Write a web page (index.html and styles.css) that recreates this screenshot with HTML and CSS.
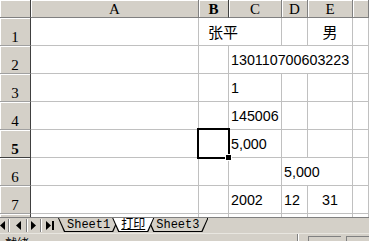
FILE: index.html
```html
<!DOCTYPE html>
<html lang="zh-CN">

<head>
  <meta charset="UTF-8">
  <meta name="viewport" content="width=device-width, initial-scale=1.0">
  <title>Book1</title>
  <link rel="stylesheet" href="styles.css">
</head>

<body>
  <div class="sheet">
    <!-- 欄標題 -->
    <div class="hd corner"></div>
    <div class="hd col">A</div>
    <div class="hd col sel">B</div>
    <div class="hd col">C</div>
    <div class="hd col">D</div>
    <div class="hd col">E</div>
    <div class="hd col"></div>

    <!-- 1 -->
    <div class="hd row">1</div>
    <div class="c"></div>
    <div class="c span2 cjk name">张平</div>
    <div class="c"></div>
    <div class="c mid cjk">男</div>
    <div class="c"></div>

    <!-- 2 -->
    <div class="hd row">2</div>
    <div class="c"></div>
    <div class="c"></div>
    <div class="c span3">130110700603223</div>
    <div class="c"></div>

    <!-- 3 -->
    <div class="hd row">3</div>
    <div class="c"></div>
    <div class="c"></div>
    <div class="c">1</div>
    <div class="c"></div>
    <div class="c"></div>
    <div class="c"></div>

    <!-- 4 -->
    <div class="hd row">4</div>
    <div class="c"></div>
    <div class="c"></div>
    <div class="c">145006</div>
    <div class="c"></div>
    <div class="c"></div>
    <div class="c"></div>

    <!-- 5 -->
    <div class="hd row sel">5</div>
    <div class="c"></div>
    <div class="c active"></div>
    <div class="c">5,000</div>
    <div class="c"></div>
    <div class="c"></div>
    <div class="c"></div>

    <!-- 6 -->
    <div class="hd row">6</div>
    <div class="c"></div>
    <div class="c"></div>
    <div class="c"></div>
    <div class="c span2">5,000</div>
    <div class="c"></div>

    <!-- 7 -->
    <div class="hd row">7</div>
    <div class="c"></div>
    <div class="c"></div>
    <div class="c">2002</div>
    <div class="c">12</div>
    <div class="c mid">31</div>
    <div class="c"></div>

    <!-- 8 -->
    <div class="hd row">8</div>
    <div class="c"></div>
    <div class="c"></div>
    <div class="c"></div>
    <div class="c"></div>
    <div class="c"></div>
    <div class="c"></div>
  </div>

  <div class="tabbar">
    <!-- 捲動按鈕 -->
    <svg class="nav" width="58" height="15" viewBox="0 0 58 15">
      <polygon points="0,7.5 5,3 5,12" fill="#000" />
      <line x1="8.5" y1="1" x2="8.5" y2="14" stroke="#808080" />
      <line x1="9.5" y1="1" x2="9.5" y2="14" stroke="#fff" />
      <polygon points="16,7.5 21,3 21,12" fill="#000" />
      <line x1="26.5" y1="1" x2="26.5" y2="14" stroke="#808080" />
      <line x1="27.5" y1="1" x2="27.5" y2="14" stroke="#fff" />
      <polygon points="31,3 31,12 36,7.5" fill="#000" />
      <line x1="40.5" y1="1" x2="40.5" y2="14" stroke="#808080" />
      <line x1="41.5" y1="1" x2="41.5" y2="14" stroke="#fff" />
      <polygon points="46,3 46,12 51,7.5" fill="#000" />
      <rect x="52" y="3" width="2" height="9" fill="#000" />
    </svg>
    <div class="tabs">
      <div class="tab"><div class="face">Sheet1</div></div>
      <div class="tab active"><div class="face">打印</div></div>
      <div class="tab"><div class="face">Sheet3</div></div>
    </div>
  </div>

  <div class="status">
    <span class="status-text">就绪</span>
    <span class="spacer"></span>
    <span class="grip"></span>
    <span class="panel one"></span>
    <span class="panel two"></span>
  </div>
</body>

</html>
```

FILE: styles.css
```css
* {
  margin: 0;
  padding: 0;
  box-sizing: border-box;
}

body {
  width: 369px;
  height: 241px;
  overflow: hidden;
  background: #d4d0c8;
  font-family: "Liberation Sans", "Noto Sans CJK SC", sans-serif;
}

/* 工作表 */
.sheet {
  display: grid;
  grid-template-columns: 31px 168px 30px 53px 26px 45px 1fr;
  grid-template-rows: 18px;
  grid-auto-rows: 28px;
  height: 217px;
  overflow: hidden;
  background: #fff;
}

.hd {
  display: flex;
  justify-content: center;
  background: #d4d0c8;
  border-right: 1px solid #808080;
  border-bottom: 1px solid #808080;
  box-shadow: inset 1px 1px #fff;
  font-family: "Liberation Serif", serif;
  font-size: 15px;
  color: #000;
}

.hd.col {
  align-items: center;
  line-height: 17px;
  padding-top: 1px;
}

.hd.row {
  align-items: flex-end;
  line-height: 15px;
  border-right-color: #404040;
  border-bottom-color: #a0a0a0;
}

.hd.corner {
  border-right-color: #404040;
}

.hd.sel {
  font-weight: bold;
}

.hd.col.sel {
  border-right-color: #404040;
}

.hd.row.sel {
  border-bottom-color: #404040;
}

.c {
  display: flex;
  align-items: flex-end;
  padding: 0 2px 5px;
  border-right: 1px solid #c0c0c0;
  border-bottom: 1px solid #c0c0c0;
  font-size: 14.3px;
  line-height: 16px;
  white-space: nowrap;
  color: #000;
}

.span2 {
  grid-column: span 2;
}

.span3 {
  grid-column: span 3;
}

.cjk {
  font-size: 15px;
  padding-bottom: 4px;
}

.name {
  padding-left: 9px;
}

.mid {
  justify-content: center;
}

/* 作用中儲存格 */
.active {
  position: relative;
}

.active::after {
  content: "";
  position: absolute;
  top: -2px;
  left: -2px;
  right: -2px;
  bottom: -2px;
  border: 2px solid #000;
}

.active::before {
  content: "";
  position: absolute;
  right: -4px;
  bottom: -4px;
  width: 5px;
  height: 5px;
  background: #000;
  border: 1px solid #fff;
  z-index: 1;
}

/* 工作表標籤 */
.tabbar {
  display: flex;
  height: 16px;
  border-top: 1px solid #808080;
  background: #d4d0c8;
}

.nav {
  flex: none;
}

.tabs {
  display: flex;
  align-items: flex-start;
}

.tab {
  position: relative;
  z-index: 1;
  height: 14px;
  background: #000;
  clip-path: polygon(0 0, 100% 0, calc(100% - 6px) 100%, 6px 100%);
}

.tab + .tab {
  margin-left: -7px;
}

.face {
  height: 13px;
  margin: 0 1px;
  padding: 0 8px;
  background: #d4d0c8;
  clip-path: polygon(0 0, 100% 0, calc(100% - 6px) 100%, 6px 100%);
  font-family: "Liberation Mono", "Noto Sans CJK SC", monospace;
  font-size: 12px;
  line-height: 14px;
  white-space: nowrap;
  color: #000;
}

.tab.active {
  z-index: 3;
}

.tab.active .face {
  background: #fff;
  text-decoration: underline;
}

/* 狀態列 */
.status {
  display: flex;
  height: 22px;
  background: #d4d0c8;
  border-top: 1px solid #e8e6e0;
}

.status-text {
  padding: 2px 0 0 5px;
  font-family: "Noto Sans CJK SC", sans-serif;
  font-size: 12px;
  line-height: 14px;
}

.spacer {
  flex: 1;
}

.grip {
  width: 2px;
  margin-right: 9px;
  border-left: 1px solid #808080;
  border-right: 1px solid #fff;
}

.panel {
  margin-top: 2px;
  height: 20px;
  border-top: 1px solid #808080;
  border-left: 1px solid #808080;
}

.panel.one {
  width: 33px;
  margin-right: 5px;
}

.panel.two {
  width: 23px;
}
```
